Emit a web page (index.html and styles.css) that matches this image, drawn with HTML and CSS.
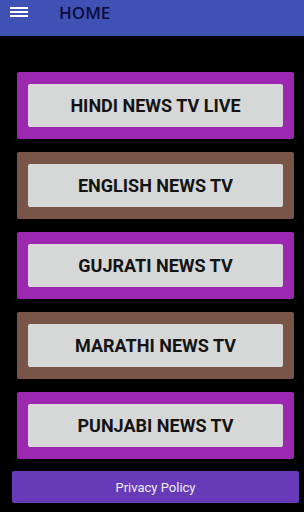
FILE: index.html
```html
<!DOCTYPE html>
<html lang="en">
<head>
    <meta charset="UTF-8">
    <meta name="viewport" content="width=device-width, initial-scale=1.0">
    <title>HOME</title>
    <link rel="stylesheet" href="styles.css">
</head>
<body>
    <div class="toolbar">
        <div class="menu-icon">
            <span></span>
            <span></span>
            <span></span>
        </div>
        <div class="toolbar-title">HOME</div>
    </div>

    <div class="channel-list">
        <div class="channel-card purple">
            <div class="channel-btn">HINDI NEWS TV LIVE</div>
        </div>
        <div class="channel-card brown">
            <div class="channel-btn">ENGLISH NEWS TV</div>
        </div>
        <div class="channel-card purple">
            <div class="channel-btn">GUJRATI NEWS TV</div>
        </div>
        <div class="channel-card brown">
            <div class="channel-btn">MARATHI NEWS TV</div>
        </div>
        <div class="channel-card purple">
            <div class="channel-btn">PUNJABI NEWS TV</div>
        </div>
    </div>

    <div class="privacy-btn">Privacy Policy</div>
</body>
</html>
```

FILE: styles.css
```css
body {
    margin: 0;
    background-color: #000;
    font-family: Roboto, "Liberation Sans", Arial, sans-serif;
    width: 304px;
    height: 512px;
    overflow: hidden;
}
.toolbar {
    height: 36px;
    background-color: #3f51b5;
    display: flex;
    align-items: center;
    padding-left: 10px;
    box-sizing: border-box;
}
.menu-icon {
    width: 18px;
    display: flex;
    flex-direction: column;
    gap: 2px;
    margin-top: -12px;
}
.menu-icon span {
    display: block;
    height: 2px;
    background-color: #fff;
}
.toolbar-title {
    margin-left: 31px;
    margin-top: -11px;
    font-family: "Open Sans", "Noto Sans", sans-serif;
    font-weight: 600;
    font-size: 17px;
    color: #0b0f3b;
}
.channel-list {
    padding: 36px 0 0 17px;
    display: flex;
    flex-direction: column;
    gap: 13px;
}
.channel-card {
    width: 277px;
    height: 67px;
    padding: 12px 11px;
    box-sizing: border-box;
    border-radius: 2px;
}
.purple {
    background-color: #9c27b0;
}
.brown {
    background-color: #795548;
}
.channel-btn {
    height: 100%;
    background-color: #d6d7d7;
    border-radius: 2px;
    display: flex;
    align-items: center;
    justify-content: center;
    font-weight: bold;
    font-size: 18px;
    color: #141414;
}
.privacy-btn {
    margin: 12px 0 0 12px;
    width: 287px;
    height: 32px;
    background-color: #673ab7;
    border-radius: 2px;
    color: #f0eef5;
    font-size: 13px;
    display: flex;
    align-items: center;
    justify-content: center;
}
```
